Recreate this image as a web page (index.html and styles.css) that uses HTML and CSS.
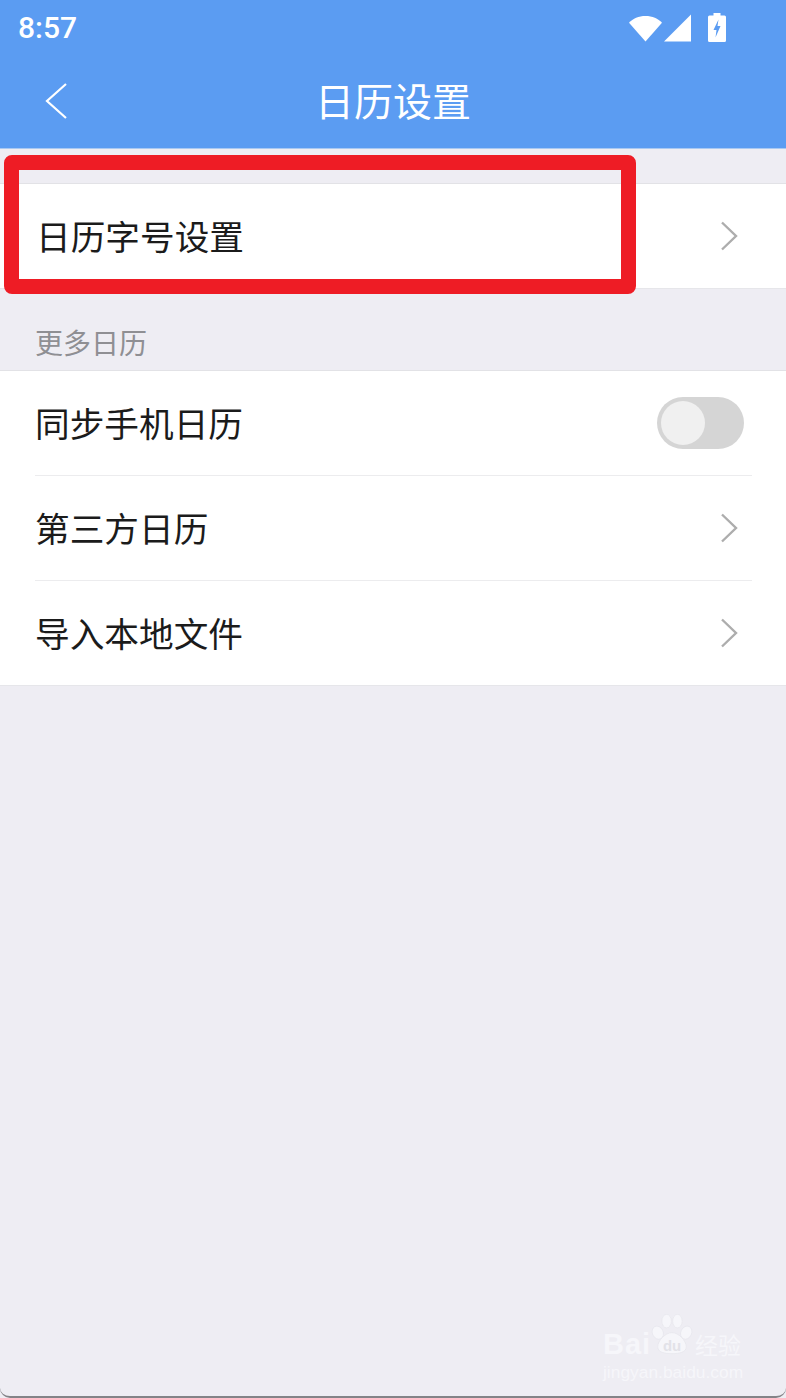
FILE: index.html
```html
<!DOCTYPE html>
<html lang="zh-CN">

<head>
    <meta charset="UTF-8">
    <meta name="viewport" content="width=device-width, initial-scale=1.0">
    <title>日历设置</title>
    <link rel="stylesheet" href="styles.css">
</head>

<body>
    <div class="phone">
        <!-- Header -->
        <header class="header">
            <div class="status-bar">
                <span class="clock">8:57</span>
                <div class="status-icons">
                    <svg width="33" height="27" viewBox="0 0 34 27">
                        <path d="M0 7.500C4 3 10 0.500 17 0.500S30 3 34 7.500L17 27Z" fill="#fff" />
                    </svg>
                    <svg width="28" height="28" viewBox="0 0 28 28">
                        <path d="M0 27.500L27 0.500V27.500Z" fill="#fff" />
                    </svg>
                    <svg width="18" height="29" viewBox="0 0 18 29">
                        <path d="M5.500 0H12.500V2.500H16.500Q18 2.500 18 4V27.500Q18 29 16.500 29H1.500Q0 29 0 27.500V4Q0 2.500 1.500 2.500H5.500Z" fill="#fff" />
                        <path d="M10.500 6.500L5.500 17H8.500L7.500 24.500L12.500 13H9.500Z" fill="#5b9cf2" />
                    </svg>
                </div>
            </div>
            <div class="title-bar">
                <svg class="back" width="26" height="40" viewBox="0 0 26 40">
                    <path d="M22 3L3 20L22 37" fill="none" stroke="#fff" stroke-width="2.200" />
                </svg>
                <h1>日历设置</h1>
            </div>
        </header>

        <!-- Font size -->
        <section class="group first-group">
            <div class="row">
                <span>日历字号设置</span>
                <svg class="arrow" width="18" height="30" viewBox="0 0 18 30">
                    <path d="M2 1.500L16 15L2 28.500" fill="none" stroke="#adadad" stroke-width="2.400" />
                </svg>
            </div>
        </section>

        <!-- More calendars -->
        <div class="section-label">更多日历</div>
        <section class="group more-group">
            <div class="row">
                <span>同步手机日历</span>
                <div class="switch">
                    <div class="knob"></div>
                </div>
            </div>
            <div class="row">
                <span>第三方日历</span>
                <svg class="arrow" width="18" height="30" viewBox="0 0 18 30">
                    <path d="M2 1.500L16 15L2 28.500" fill="none" stroke="#adadad" stroke-width="2.400" />
                </svg>
            </div>
            <div class="row">
                <span>导入本地文件</span>
                <svg class="arrow" width="18" height="30" viewBox="0 0 18 30">
                    <path d="M2 1.500L16 15L2 28.500" fill="none" stroke="#adadad" stroke-width="2.400" />
                </svg>
            </div>
        </section>

        <!-- Annotation drawn over the screenshot -->
        <div class="red-frame"></div>

        <!-- Watermark -->
        <div class="watermark">
            <div class="mark-line">
                <span class="mark-bai">Bai</span>
                <svg class="paw" width="42" height="42" viewBox="0 0 62 60">
                    <g fill="#f6f6fa" stroke="#e6e6ec" stroke-width="1">
                        <ellipse cx="10" cy="28" rx="8" ry="10" transform="rotate(-25 10 28)" />
                        <ellipse cx="23" cy="11" rx="7" ry="10" />
                        <ellipse cx="39" cy="11" rx="7" ry="10" />
                        <ellipse cx="52" cy="28" rx="8" ry="10" transform="rotate(25 52 28)" />
                        <path d="M31 28C41 28 52 40 52 49C52 57 42 59 31 59S10 57 10 49C10 40 21 28 31 28Z" />
                    </g>
                    <text x="31" y="55" text-anchor="middle" class="paw-text">du</text>
                </svg>
                <span class="mark-cn">经验</span>
            </div>
            <div class="mark-url">jingyan.baidu.com</div>
        </div>

        <div class="bottom-edge"></div>
    </div>
</body>

</html>
```

FILE: styles.css
```css
html,
body {
    margin: 0;
    padding: 0;
}

body {
    font-family: "Noto Sans CJK SC", "Liberation Sans", sans-serif;
    background-color: #eeedf3;
    color: #1b1b1b;
}

.phone {
    position: relative;
    width: 786px;
    height: 1398px;
    overflow: hidden;
    background-color: #eeedf3;
}

.header {
    height: 148px;
    background-color: #5b9cf2;
    border-bottom: 1px solid #a9c9f3;
    color: white;
}

.status-bar {
    height: 54px;
    padding: 0 60px 0 18px;
    display: flex;
    justify-content: space-between;
    align-items: center;
}

.clock {
    font-family: Roboto, "Liberation Sans", sans-serif;
    font-size: 30px;
    font-weight: 500;
}

.status-icons {
    display: flex;
    align-items: flex-end;
    gap: 2px;
    height: 30px;
}

.status-icons svg:last-child {
    margin-left: 14px;
}

.title-bar {
    position: relative;
    height: 94px;
    display: flex;
    justify-content: center;
    align-items: center;
}

.title-bar h1 {
    margin: 0 0 4px;
    font-size: 39px;
    font-weight: 400;
    line-height: 90px;
}

.back {
    position: absolute;
    left: 44px;
    top: 27px;
}

.group {
    background-color: white;
    border-top: 1px solid #e2e2e6;
    border-bottom: 1px solid #e6e6ea;
}

.first-group {
    margin-top: 34px;
}

.row {
    height: 104px;
    margin: 0 34px 0 36px;
    padding-right: 14px;
    display: flex;
    justify-content: space-between;
    align-items: center;
    font-size: 34.670px;
    border-bottom: 1px solid #ececee;
}

.more-group .row {
    margin-left: 35px;
}

.row span {
    margin-bottom: 2px;
}

.row:last-child {
    border-bottom: none;
}

.section-label {
    height: 81px;
    padding-left: 35px;
    font-size: 28px;
    line-height: 106px;
    color: #8f8f93;
    box-sizing: border-box;
    overflow: hidden;
}

.switch {
    width: 87px;
    height: 52px;
    margin-right: -6px;
    border-radius: 26px;
    background-color: #d5d5d5;
    padding: 4px;
    box-sizing: border-box;
}

.knob {
    width: 44px;
    height: 44px;
    border-radius: 50%;
    background-color: #f0f0f0;
}

.red-frame {
    position: absolute;
    left: 4px;
    top: 155px;
    width: 602px;
    height: 109px;
    border: 15px solid #ee1c25;
    border-radius: 8px;
}

.watermark {
    position: absolute;
    left: 603px;
    top: 1313px;
    width: 150px;
    color: #f6f6fa;
}

.mark-line {
    display: flex;
    align-items: flex-end;
    height: 44px;
}

.mark-bai {
    font-family: "Liberation Sans", sans-serif;
    font-size: 29px;
    font-weight: 700;
    letter-spacing: 1px;
    line-height: 26px;
    width: 48px;
}

.paw {
    flex-shrink: 0;
    margin-bottom: 2px;
}

.paw-text {
    font-family: "Liberation Sans", sans-serif;
    font-size: 22px;
    font-weight: 700;
    fill: #e2e2e8;
}

.mark-cn {
    font-size: 23px;
    line-height: 26px;
    margin-left: 2px;
    white-space: nowrap;
}

.mark-url {
    font-family: "Liberation Sans", sans-serif;
    font-size: 17.400px;
    line-height: 20px;
    margin-top: 5px;
    white-space: nowrap;
}

.bottom-edge {
    position: absolute;
    left: 0;
    right: 0;
    bottom: 0;
    height: 10px;
    border-bottom: 2px solid #838387;
    border-radius: 0 0 10px 10px;
}
```
